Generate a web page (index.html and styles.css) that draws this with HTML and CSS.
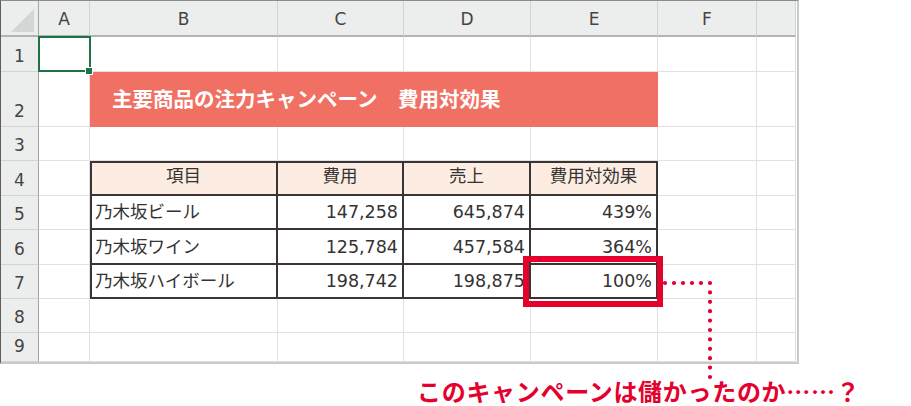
FILE: index.html
```html
<!DOCTYPE html>
<html lang="ja">
<head>
  <meta charset="UTF-8" />
  <meta name="viewport" content="width=device-width, initial-scale=1" />
  <title>費用対効果</title>
  <link rel="stylesheet" href="styles.css">
</head>
<body>

  <div class="wrap">
    <div class="sheet">
      <!-- 列見出し -->
      <div class="corner"></div>
      <div class="ch">A</div>
      <div class="ch">B</div>
      <div class="ch">C</div>
      <div class="ch">D</div>
      <div class="ch">E</div>
      <div class="ch">F</div>
      <div class="ch"></div>

      <!-- 1 -->
      <div class="rh">1</div>
      <div class="c sel"></div>
      <div class="c"></div><div class="c"></div><div class="c"></div><div class="c"></div><div class="c"></div><div class="c"></div>

      <!-- 2 -->
      <div class="rh">2</div>
      <div class="c"></div>
      <div class="title">主要商品の注力キャンペーン　費用対効果</div>
      <div class="c"></div><div class="c"></div>

      <!-- 3 -->
      <div class="rh">3</div>
      <div class="c"></div><div class="c"></div><div class="c"></div><div class="c"></div><div class="c"></div><div class="c"></div><div class="c"></div>

      <!-- 4 -->
      <div class="rh">4</div>
      <div class="c"></div>
      <div class="t th first">項目</div>
      <div class="t th">費用</div>
      <div class="t th">売上</div>
      <div class="t th">費用対効果</div>
      <div class="c"></div><div class="c"></div>

      <!-- 5 -->
      <div class="rh">5</div>
      <div class="c"></div>
      <div class="t first">乃木坂ビール</div>
      <div class="t num">147,258</div>
      <div class="t num">645,874</div>
      <div class="t num">439%</div>
      <div class="c"></div><div class="c"></div>

      <!-- 6 -->
      <div class="rh">6</div>
      <div class="c"></div>
      <div class="t first">乃木坂ワイン</div>
      <div class="t num">125,784</div>
      <div class="t num">457,584</div>
      <div class="t num">364%</div>
      <div class="c"></div><div class="c"></div>

      <!-- 7 -->
      <div class="rh">7</div>
      <div class="c"></div>
      <div class="t first">乃木坂ハイボール</div>
      <div class="t num">198,742</div>
      <div class="t num">198,875</div>
      <div class="t num">100%</div>
      <div class="c"></div><div class="c"></div>

      <!-- 8 -->
      <div class="rh">8</div>
      <div class="c"></div><div class="c"></div><div class="c"></div><div class="c"></div><div class="c"></div><div class="c"></div><div class="c"></div>

      <!-- 9 -->
      <div class="rh">9</div>
      <div class="c"></div><div class="c"></div><div class="c"></div><div class="c"></div><div class="c"></div><div class="c"></div><div class="c"></div>
    </div>

    <!-- 100% のセルを囲む枠と引き出し線 -->
    <div class="callout"></div>
    <svg class="leader" width="56" height="106" viewBox="0 0 56 106">
      <path d="M5 5 H50" />
      <path d="M50 5 V99" class="down" />
    </svg>

    <p class="question">このキャンペーンは儲かったのか……？</p>
  </div>

</body>
</html>
```

FILE: styles.css
```css
body {
  margin: 0;
  background: #fff;
  font-family: "DejaVu Sans", "Noto Sans CJK JP", sans-serif;
}
.wrap {
  position: relative;
  width: 911px;
}

/* シート本体 */
.sheet {
  display: grid;
  grid-template-columns: 38px 51px 188px 126px 127px 127px 99px 39px;
  grid-template-rows: 36px 35px 55px 34px 35px 34px 35px 34px 34px 29px;
  width: 799px;
  box-sizing: border-box;
  border-left: 1px solid #5e5e5e;
  border-top: 1px solid #8c8c8c;
  border-right: 2px solid #c9c9c9;
  border-bottom: 2px solid #c9c9c9;
  color: #333;
  line-height: 1;
}
.sheet > div {
  box-sizing: border-box;
  display: flex;
}

.corner {
  position: relative;
  background: #eceeed;
  border-right: 1px solid #a3a3a3;
  border-bottom: 2px solid #b3b3b3;
}
.corner::after {
  content: "";
  position: absolute;
  right: 4px;
  bottom: 3px;
  width: 0;
  height: 0;
  border-left: 23px solid transparent;
  border-bottom: 23px solid #d4d6d5;
}
.ch {
  background: #eceeed;
  border-right: 1px solid #d2d4d3;
  border-bottom: 2px solid #b3b3b3;
  justify-content: center;
  align-items: center;
  padding-top: 3px;
  font-size: 17px;
  color: #444;
}
.rh {
  background: #eceeed;
  border-right: 1px solid #a3a3a3;
  border-bottom: 1px solid #d2d4d3;
  justify-content: center;
  align-items: flex-end;
  padding-bottom: 6px;
  font-size: 17px;
  color: #444;
}
.c {
  border-right: 1px solid #e1e1e1;
  border-bottom: 1px solid #e1e1e1;
}

/* 選択中のセル */
.sel {
  position: relative;
}
.sel::before {
  content: "";
  position: absolute;
  left: -1px;
  top: -1px;
  right: -2px;
  bottom: -1px;
  border: 2px solid #1f7244;
  z-index: 2;
}
.sel::after {
  content: "";
  position: absolute;
  right: -4px;
  bottom: -4px;
  width: 6px;
  height: 6px;
  background: #1f7244;
  border: 1px solid #fff;
  z-index: 3;
}

.title {
  grid-column: span 4;
  background: #f07163;
  color: #fff;
  font-family: "Noto Sans CJK JP", sans-serif;
  font-weight: 700;
  font-size: 20.5px;
  align-items: center;
  padding: 0 0 3px 22px;
}

/* 表 */
.t {
  border-right: 2px solid #3b3434;
  border-bottom: 2px solid #3b3434;
  font-size: 17.5px;
  align-items: flex-end;
  padding: 0 4px 7px;
}
.t.first {
  border-left: 2px solid #3b3434;
  padding-left: 3px;
}
.th {
  border-top: 2px solid #3b3434;
  background: #fcece1;
  justify-content: center;
  padding-bottom: 9px;
}
.num {
  justify-content: flex-end;
}

/* 注目の枠と点線 */
.callout {
  position: absolute;
  left: 523px;
  top: 256px;
  width: 140px;
  height: 51px;
  box-sizing: border-box;
  border: 6px solid #e5002d;
}
.leader {
  position: absolute;
  left: 660px;
  top: 278px;
  fill: none;
}
.leader path {
  stroke: #e5002d;
  stroke-width: 4.2;
  stroke-linecap: round;
  stroke-dasharray: 0 9;
}
.leader .down {
  stroke-dasharray: 0 9.4;
}

.question {
  margin: 15px 0 0;
  padding-left: 417px;
  font-family: "Noto Sans CJK JP", sans-serif;
  font-weight: 700;
  font-size: 24px;
  line-height: 1;
  letter-spacing: 0.7px;
  color: #e5002d;
  white-space: nowrap;
}
```
